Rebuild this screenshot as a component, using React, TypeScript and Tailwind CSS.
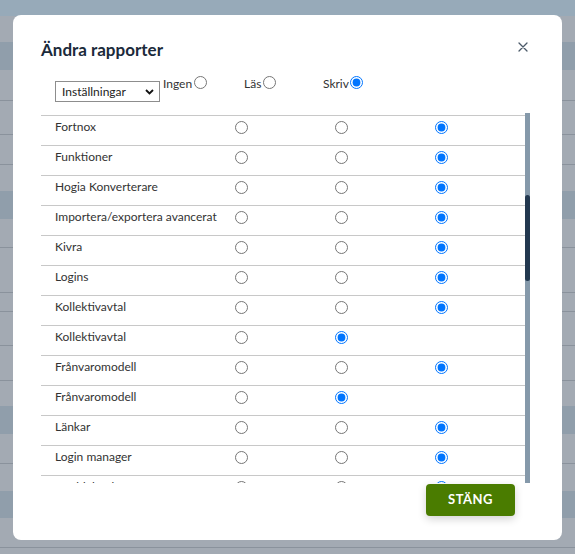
import React from "react"

const stripes = [
  "h-[16px] bg-[#97aab9]",
  "h-[26px] bg-[#a3aab3]",
  "h-[28px] bg-[#909eab]",
  "h-[31px] bg-[#a3aab3] border-b border-[#8a929c]",
  "h-[34px] bg-[#a3aab3] border-b border-[#8a929c]",
  "h-[30px] bg-[#a3aab3] border-b border-[#8a929c]",
  "h-[26px] bg-[#a3aab3]",
  "h-[28px] bg-[#909eab]",
  "h-[29px] bg-[#a3aab3] border-b border-[#8a929c]",
  "h-[45px] bg-[#a3aab3] border-b border-[#8a929c]",
  "h-[19px] bg-[#a3aab3] border-b border-[#8a929c]",
  "h-[34px] bg-[#a3aab3] border-b border-[#8a929c]",
  "h-[35px] bg-[#a3aab3] border-b border-[#8a929c]",
  "h-[25px] bg-[#a3aab3]",
  "h-[28px] bg-[#909eab]",
  "h-[30px] bg-[#a3aab3] border-b border-[#8a929c]",
  "h-[27px] bg-[#a3aab3]",
  "h-[27px] bg-[#909eab]",
  "h-[30px] bg-[#a3aab3] border-b border-[#8a929c]",
  "h-[6px] bg-[#a3aab3]",
]

// [label, number of radios, which one is checked]
const rows: [string, number, number][] = [
  ["Fortnox", 3, 3],
  ["Funktioner", 3, 3],
  ["Hogia Konverterare", 3, 3],
  ["Importera/exportera avancerat", 3, 3],
  ["Kivra", 3, 3],
  ["Logins", 3, 3],
  ["Kollektivavtal", 3, 3],
  ["Kollektivavtal", 2, 2],
  ["Frånvaromodell", 3, 3],
  ["Frånvaromodell", 2, 2],
  ["Länkar", 3, 3],
  ["Login manager", 3, 3],
  ["Meddelanden", 3, 3],
]

function Radio({ name, checked }: { name: string; checked?: boolean }) {
  return <input type="radio" name={name} defaultChecked={checked} className="m-0 h-[13px] w-[13px]" />
}

export default function App() {
  return (
    <div className="relative h-[554px] w-[575px] overflow-hidden font-['Lato',sans-serif]">
      <div className="flex flex-col">
        {stripes.map((s, i) => (
          <div key={i} className={s} />
        ))}
      </div>

      <div className="absolute left-[13px] top-[15px] flex h-[525px] w-[549px] flex-col rounded-[8px] bg-white pl-[28px] pr-[32px] pt-[25px] pb-[24px]">
        <div className="flex h-[20px] items-start justify-between">
          <h2 className="text-[17px] font-bold leading-[20px] text-[#1b2a3b]">Ändra rapporter</h2>
          <svg width="10" height="10" viewBox="0 0 10 10" className="mr-[2px] mt-[2px] text-[#4b5a69]">
            <path d="M1 1L9 9M9 1L1 9" stroke="currentColor" strokeWidth="1.3" strokeLinecap="round" />
          </svg>
        </div>

        <div className="mt-[21px] flex h-[21px] items-start pl-[14px]">
          <div className="flex h-[21px] w-[105px] items-center justify-between border border-[#8d8d8d] pl-[6px] pr-[5px] text-[12px] text-[#222]">
            <span>Inställningar</span>
            <svg width="9" height="6" viewBox="0 0 9 6">
              <path d="M1 1L4.5 4.5L8 1" fill="none" stroke="#111" strokeWidth="1.8" />
            </svg>
          </div>
          <div className="-mt-[4px] ml-[3px] flex text-[12px] leading-[14px] text-[#333]">
            <label className="flex w-[81px] items-start">
              Ingen
              <span className="ml-[2px] -mt-[1px] flex">
                <Radio name="all" />
              </span>
            </label>
            <label className="flex w-[79px] items-start">
              Läs
              <span className="ml-[2px] -mt-[1px] flex">
                <Radio name="all" />
              </span>
            </label>
            <label className="flex items-start">
              Skriv
              <span className="ml-[1px] -mt-[1px] flex">
                <Radio name="all" checked />
              </span>
            </label>
          </div>
        </div>

        <div className="mt-[11px] flex h-[370px]">
          <div className="flex-1 overflow-hidden pt-[2px]">
            <div className="border-t border-[#c8c8c8]">
              {rows.map(([label, count, checked], i) => (
                <div
                  key={i}
                  className="grid h-[30px] grid-cols-[150px_100px_100px_100px_1fr] items-center border-b border-[#c8c8c8] pb-[7px] text-[12px] text-[#333]"
                >
                  <span className="whitespace-nowrap pl-[14px]">{label}</span>
                  {[1, 2, 3].map((n) => (
                    <div key={n} className="flex justify-center">
                      {n <= count && <Radio name={"row" + i} checked={n === checked} />}
                    </div>
                  ))}
                  <span />
                </div>
              ))}
            </div>
          </div>
          <div className="w-[5px] bg-[#8599aa]">
            <div className="mt-[82px] h-[86px] rounded-full bg-[#22384f]" />
          </div>
        </div>

        <div className="mt-[1px] flex justify-end pr-[15px]">
          <button className="h-[32px] w-[89px] rounded-[4px] bg-[#4a7c00] text-[13px] font-bold tracking-[0.5px] text-white shadow-[0_3px_8px_rgba(0,0,0,0.18)]">
            STÄNG
          </button>
        </div>
      </div>
    </div>
  )
}
